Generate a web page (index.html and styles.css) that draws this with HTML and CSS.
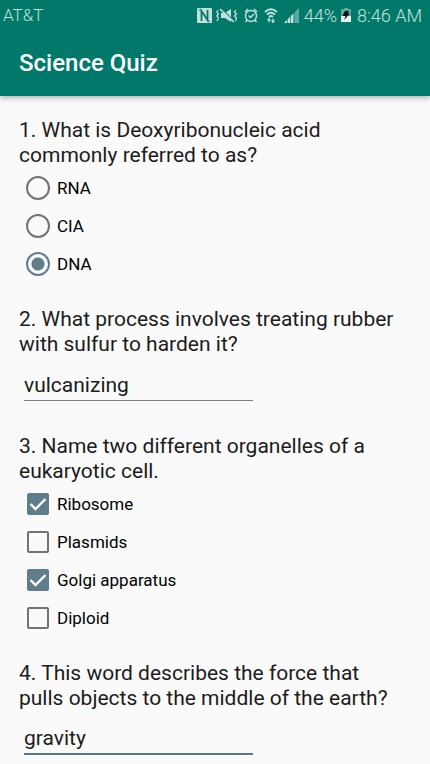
FILE: index.html
```html
<!DOCTYPE html>
<html lang="en">
<head>
<meta charset="utf-8">
<meta name="viewport" content="width=device-width, initial-scale=1">
<title>Science Quiz</title>
<link rel="stylesheet" href="styles.css">
</head>
<body>
<header class="top">
  <div class="status">
    <span class="carrier">AT&amp;T</span>
    <div class="icons">
      <svg class="nfc" width="15" height="15" viewBox="0 0 15 15">
        <rect width="15" height="15" rx="1" fill="#c5e0dc"/>
        <path d="M4.500 13V3L10.500 12V2" fill="none" stroke="#00796b" stroke-width="1.800"/>
        <path d="M2 2h2.500M10.500 13H13" fill="none" stroke="#00796b" stroke-width="1"/>
      </svg>
      <svg class="mute" width="22" height="15" viewBox="0 0 22 15">
        <path d="M5 5h4l6-4v13l-6-4H5z" fill="#c5e0dc"/>
        <path d="M5 1l13 12.500" stroke="#00796b" stroke-width="2.200"/>
        <path d="M4 1l14 13" stroke="#c5e0dc" stroke-width="1.700"/>
        <path d="M2 2L.8 4 2.500 6 .8 8 2.500 10 1 13M20 2l-1.500 2L20.500 6l-2 2 2 2-1 3" fill="none" stroke="#c5e0dc" stroke-width="1.200"/>
      </svg>
      <svg class="alarm" width="14" height="15" viewBox="0 0 14 15">
        <circle cx="7" cy="8" r="5.500" fill="none" stroke="#c5e0dc" stroke-width="1.400"/>
        <path d="M1 4l3-3M13 4l-3-3M4.500 7.500l2 2L10 6M3 12l-1.500 2M11 12l1.500 2" fill="none" stroke="#c5e0dc" stroke-width="1.500"/>
      </svg>
      <svg class="wifi" width="14" height="15" viewBox="0 0 14 15">
        <path d="M1 4Q7-1.500 13 4M3 6.500q4-3.500 8 0M5 9q2-2 4 0" fill="none" stroke="#c5e0dc" stroke-width="1.700"/>
        <path d="M5 14.500V11M9 10.500V14M3.500 12.500L5 10.500l1.500 2M7.500 12.500L9 14.500l1.500-2" fill="none" stroke="#c5e0dc" stroke-width="1.200"/>
      </svg>
      <svg class="signal" width="15" height="15" viewBox="0 0 15 15">
        <path d="M0 15L15 0v15z" fill="#5fa79e"/>
        <path d="M0 15L9.500 5.500V15z" fill="#c5e0dc"/>
        <path d="M3.500 8v7M6.500 5v10M10 3v12" stroke="#00796b" stroke-width=".7"/>
      </svg>
    </div>
    <span class="percent">44%</span>
    <svg class="battery" width="10" height="14" viewBox="0 0 10 14">
      <path d="M3 0h4v1h3v13H0V1h3z" fill="#5fa79e"/>
      <path d="M0 8h10v6H0z" fill="#e5f2f0"/>
      <path d="M4 3h4L6.500 5.500h2.500L3 12 4.500 8H1.500z" fill="#111"/>
    </svg>
    <time>8:46 AM</time>
  </div>
  <h1>Science Quiz</h1>
</header>
<main>
  <fieldset>
    <legend>1. What is Deoxyribonucleic acid commonly referred to as?</legend>
    <label class="option"><input type="radio" name="q1">RNA</label>
    <label class="option"><input type="radio" name="q1">CIA</label>
    <label class="option"><input type="radio" name="q1" checked>DNA</label>
  </fieldset>
  <div class="question">
    <label class="prompt" for="q2">2. What process involves treating rubber with sulfur to harden it?</label>
    <input class="answer" id="q2" type="text" value="vulcanizing">
  </div>
  <fieldset>
    <legend>3. Name two different organelles of a eukaryotic cell.</legend>
    <label class="option"><input type="checkbox" checked>Ribosome</label>
    <label class="option"><input type="checkbox">Plasmids</label>
    <label class="option"><input type="checkbox" checked>Golgi apparatus</label>
    <label class="option"><input type="checkbox">Diploid</label>
  </fieldset>
  <div class="question">
    <label class="prompt" for="q4">4. This word describes the force that pulls objects to the middle of the earth?</label>
    <input class="answer active" id="q4" type="text" value="gravity">
  </div>
</main>
</body>
</html>
```
FILE: styles.css
```css
* {
  box-sizing: border-box;
}

body {
  margin: 0;
  background: #fafafa;
  color: #1c1c1c;
  font-family: Roboto, sans-serif;
}

.top {
  background: #00796b;
  box-shadow: 0 2px 6px rgba(0, 0, 0, 0.3);
}

.status {
  display: flex;
  align-items: center;
  height: 30px;
  padding: 0 8px 0 3px;
  color: #c5e0dc;
  font-size: 18px;
  font-weight: 300;
}

.carrier {
  margin-right: auto;
  font-size: 17px;
}

.icons {
  display: flex;
  gap: 6px;
  margin-right: 5px;
}

.nfc {
  margin-right: -2px;
}

.battery {
  margin: 0 6px 0 4px;
}

h1 {
  margin: 0;
  padding: 18px 19px;
  color: #fff;
  font-size: 24px;
  font-weight: 500;
  line-height: 30px;
}

main {
  display: flex;
  flex-direction: column;
  gap: 24px;
  padding: 22px 24px 0 19px;
}

fieldset {
  min-width: 0;
  margin: 0;
  padding: 0;
  border: 0;
}

legend,
.prompt {
  display: block;
  padding: 0;
  font-size: 21px;
  line-height: 25px;
}

legend {
  padding-bottom: 1px;
}

.option {
  display: flex;
  align-items: center;
  gap: 7px;
  height: 38px;
  padding-left: 7px;
  color: #000;
  font-size: 17px;
}

.option input {
  appearance: none;
  flex: none;
  margin: 0;
  border: 2px solid #737373;
}

.option input[type="radio"] {
  width: 24px;
  height: 24px;
  border-radius: 50%;
}

.option input[type="radio"]:checked {
  border-color: #607d8b;
  background: radial-gradient(circle, #607d8b 6px, transparent 7px);
}

.option input[type="checkbox"] {
  width: 22px;
  height: 22px;
  margin: 0 1px;
  border-radius: 2px;
}

.option input[type="checkbox"]:checked {
  border-color: #607d8b;
  background: #607d8b url("data:image/svg+xml,%3Csvg xmlns='http://www.w3.org/2000/svg' viewBox='0 0 18 18'%3E%3Cpath d='M1.500 9l5 5L16.500 4' fill='none' stroke='white' stroke-width='2.400'/%3E%3C/svg%3E") center / 18px no-repeat;
}

.answer {
  display: block;
  width: 60%;
  max-width: 229px;
  height: 44px;
  margin: 0 5px 9px;
  padding: 12px 0 0;
  border: 0;
  border-bottom: 1px solid #808080;
  outline: 0;
  background: transparent;
  color: #1c1c1c;
  font-family: inherit;
  font-size: 21px;
  line-height: 25px;
}

.answer.active {
  border-bottom: 2px solid #54788a;
}
```
